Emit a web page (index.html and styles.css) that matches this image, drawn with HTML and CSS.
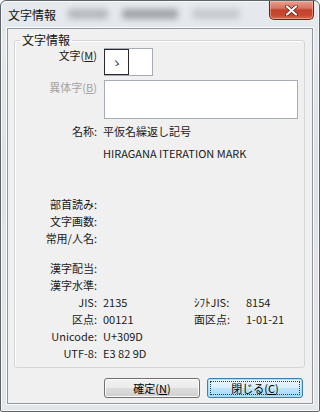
FILE: index.html
```html
<!DOCTYPE html>
<html lang="ja">
<head>
    <meta charset="UTF-8">
    <meta name="viewport" content="width=device-width, initial-scale=1.0">
    <title>文字情報</title>
    <link rel="stylesheet" href="styles.css">
</head>
<body>
    <div class="window">
        <div class="titlebar">
            <span class="title">文字情報</span>
            <div class="glass">
                <span class="smudge s1"></span>
                <span class="smudge s2"></span>
                <span class="smudge s3"></span>
            </div>
            <a href="javascript:;" class="close">
                <svg width="13" height="11" viewBox="0 0 13 11">
                    <path d="M2 1.5 L11 9.5 M11 1.5 L2 9.5" stroke="#5a1a12" stroke-width="3.6" stroke-linecap="round"/>
                    <path d="M2 1.5 L11 9.5 M11 1.5 L2 9.5" stroke="#fff" stroke-width="2.2" stroke-linecap="round"/>
                </svg>
            </a>
        </div>
        <div class="client">
            <fieldset class="group">
                <legend>文字情報</legend>
                <div class="row row-char">
                    <span class="lbl">文字(<u>M</u>)</span>
                    <div class="charbox"><span class="glyph">ゝ</span></div>
                </div>
                <div class="row row-var">
                    <span class="lbl off">異体字(<u>B</u>)</span>
                    <div class="varbox"></div>
                </div>
                <div class="row info name">
                    <span class="lbl">名称:</span>
                    <span class="val">平仮名繰返し記号</span>
                </div>
                <div class="row info eng">
                    <span class="lbl"></span>
                    <span class="val">HIRAGANA ITERATION MARK</span>
                </div>
                <div class="row info first">
                    <span class="lbl">部首読み:</span>
                </div>
                <div class="row info">
                    <span class="lbl">文字画数:</span>
                </div>
                <div class="row info">
                    <span class="lbl">常用/人名:</span>
                </div>
                <div class="row info second">
                    <span class="lbl">漢字配当:</span>
                </div>
                <div class="row info">
                    <span class="lbl">漢字水準:</span>
                </div>
                <div class="row info">
                    <span class="lbl">JIS:</span>
                    <span class="val half">2135</span>
                    <span class="lbl2">ｼﾌﾄJIS:</span>
                    <span class="val">8154</span>
                </div>
                <div class="row info">
                    <span class="lbl">区点:</span>
                    <span class="val half">00121</span>
                    <span class="lbl2">面区点:</span>
                    <span class="val">1-01-21</span>
                </div>
                <div class="row info">
                    <span class="lbl">Unicode:</span>
                    <span class="val">U+309D</span>
                </div>
                <div class="row info">
                    <span class="lbl">UTF-8:</span>
                    <span class="val">E3 82 9D</span>
                </div>
            </fieldset>
            <div class="buttons">
                <a href="javascript:;" class="btn">確定(<u>N</u>)</a>
                <a href="javascript:;" class="btn default"><span class="focus">閉じる(<u>C</u>)</span></a>
            </div>
        </div>
    </div>
</body>
</html>
```

FILE: styles.css
```css
* {
    padding: 0px;
    margin: 0px;
    box-sizing: border-box;
}

a {
    text-decoration: none;
    color: #000;
}

body {
    width: 320px;
    height: 412px;
    background: #fff;
    font-family: "Noto Sans CJK JP", "Noto Sans", sans-serif;
    font-size: 11px;
    color: #1a1a1a;
}

.window {
    width: 320px;
    height: 412px;
    display: flex;
    flex-direction: column;
    border: 1px solid #5e6368;
    border-radius: 6px 6px 2px 2px;
    background: linear-gradient(#e6eaee, #dde2e7 40%, #e4e7ea);
    box-shadow: inset 0 0 0 1px #f7f9fb;
}

/* title bar */
.titlebar {
    height: 27px;
    display: flex;
    align-items: flex-start;
}

.title {
    margin: 6px 0 0 7px;
    font-size: 12px;
    line-height: 16px;
    color: #111;
}

.glass {
    display: flex;
    gap: 14px;
    margin: 8px 0 0 12px;
}

.smudge {
    display: block;
    height: 10px;
    background: rgba(120, 126, 134, 0.45);
    filter: blur(3px);
    border-radius: 3px;
}

.s1 { width: 40px; }
.s2 { width: 56px; background: rgba(90, 96, 104, 0.5); }
.s3 { width: 48px; background: rgba(150, 156, 164, 0.4); }

.close {
    margin-left: auto;
    margin-right: 5px;
    width: 45px;
    height: 19px;
    display: flex;
    align-items: center;
    justify-content: center;
    border: 1px solid #6a2318;
    border-top: 0;
    border-radius: 0 0 5px 5px;
    background: linear-gradient(#e6a391 0%, #d8725d 40%, #c2412b 50%, #c94a33 80%, #d86a52 100%);
    box-shadow: inset 0 0 0 1px rgba(255, 200, 190, 0.5);
}

/* client area */
.client {
    flex: 1;
    margin: 0 6px 7px 6px;
    padding: 4px 7px 0 6px;
    background: #f0f0f0;
    border: 1px solid #8f969e;
    box-shadow: 0 0 0 1px #fbfcfd;
    display: flex;
    flex-direction: column;
}

.group {
    border: 1px solid #d3d6d9;
    border-radius: 3px;
    padding: 0 0 5px 0;
    box-shadow: inset 1px 1px 0 #fff;
}

.group legend {
    margin-left: 5px;
    padding: 0 2px;
    font-size: 12px;
    line-height: 14px;
    color: #111;
}

.row {
    display: flex;
    gap: 6px;
}

.lbl {
    width: 82px;
    flex-shrink: 0;
    text-align: right;
    line-height: 14px;
}

.lbl.off {
    color: #a3a3a3;
}

.row-char {
    margin-top: 1px;
    height: 28px;
    gap: 7px;
}

.charbox {
    width: 49px;
    height: 28px;
    background: #fff;
    border: 1px solid #a5acb5;
    display: flex;
}

.glyph {
    width: 25px;
    height: 26px;
    border: 1px solid #2a2a2a;
    display: flex;
    align-items: center;
    justify-content: center;
    font-size: 10px;
    margin-left: -1px;
}

.row-var {
    margin-top: 4px;
    height: 39px;
    gap: 7px;
}

.varbox {
    width: 194px;
    height: 39px;
    background: #fff;
    border: 1px solid #a5acb5;
}

.info {
    height: 17px;
    line-height: 17px;
}

.info .lbl {
    line-height: 17px;
}

.name {
    margin-top: 4px;
}

.eng {
    margin-top: 5px;
}

.first {
    margin-top: 34px;
}

.second {
    margin-top: 13px;
}

.val.half {
    width: 85px;
    flex-shrink: 0;
}

.lbl2 {
    width: 46px;
    flex-shrink: 0;
}

/* buttons */
.buttons {
    display: flex;
    justify-content: flex-end;
    gap: 7px;
    margin: 10px 2px 0 0;
}

.btn {
    width: 96px;
    height: 20px;
    display: flex;
    align-items: center;
    justify-content: center;
    border: 1px solid #707070;
    border-radius: 3px;
    background: linear-gradient(#f2f2f2 0%, #ebebeb 48%, #dddddd 52%, #cfcfcf 100%);
    box-shadow: inset 0 0 0 1px #fcfcfc;
    line-height: 16px;
}

.btn.default {
    border-color: #3c7fb1;
    background: linear-gradient(#eaf6fd 0%, #d9f0fc 48%, #bee6fd 52%, #a7d9f5 100%);
    box-shadow: inset 0 0 0 1px #a8dff8;
    padding: 2px;
}

.focus {
    width: 100%;
    height: 100%;
    display: flex;
    align-items: center;
    justify-content: center;
    border: 1px dotted #1d3b52;
}
```
